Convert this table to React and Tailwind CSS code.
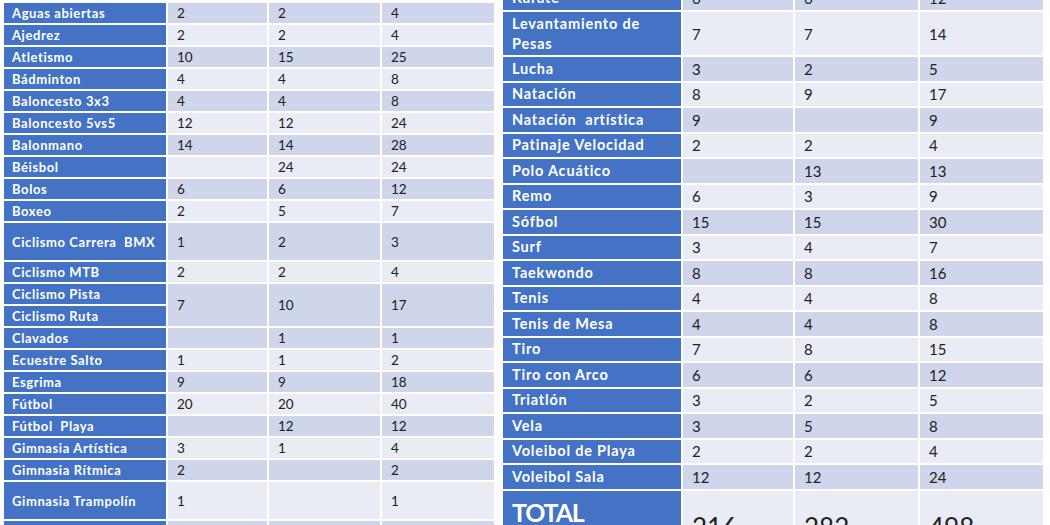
const leftRows = [
  { label: 'Aguas abiertas', v: ['2', '2', '4'] },
  { label: 'Ajedrez', v: ['2', '2', '4'] },
  { label: 'Atletismo', v: ['10', '15', '25'] },
  { label: 'Bádminton', v: ['4', '4', '8'] },
  { label: 'Baloncesto 3x3', v: ['4', '4', '8'] },
  { label: 'Baloncesto 5vs5', v: ['12', '12', '24'] },
  { label: 'Balonmano', v: ['14', '14', '28'] },
  { label: 'Béisbol', v: ['', '24', '24'] },
  { label: 'Bolos', v: ['6', '6', '12'] },
  { label: 'Boxeo', v: ['2', '5', '7'] },
  { label: 'Ciclismo Carrera\u00a0 BMX', v: ['1', '2', '3'], tall: true },
  { label: 'Ciclismo MTB', v: ['2', '2', '4'] },
  { label: 'Ciclismo Pista', v: ['7', '10', '17'], span: 2 },
  { label: 'Ciclismo Ruta', v: null },
  { label: 'Clavados', v: ['', '1', '1'] },
  { label: 'Ecuestre Salto', v: ['1', '1', '2'] },
  { label: 'Esgrima', v: ['9', '9', '18'] },
  { label: 'Fútbol', v: ['20', '20', '40'] },
  { label: 'Fútbol\u00a0 Playa', v: ['', '12', '12'] },
  { label: 'Gimnasia Artística', v: ['3', '1', '4'] },
  { label: 'Gimnasia Rítmica', v: ['2', '', '2'] },
  { label: 'Gimnasia Trampolín', v: ['1', '', '1'], tall: true },
  { label: '', v: ['', '', ''] },
];

const rightRows = [
  { label: 'Karate', v: ['6', '6', '12'] },
  { label: ['Levantamiento de', 'Pesas'], v: ['7', '7', '14'], tall: true },
  { label: 'Lucha', v: ['3', '2', '5'] },
  { label: 'Natación', v: ['8', '9', '17'] },
  { label: 'Natación\u00a0 artística', v: ['9', '', '9'] },
  { label: 'Patinaje Velocidad', v: ['2', '2', '4'] },
  { label: 'Polo Acuático', v: ['', '13', '13'] },
  { label: 'Remo', v: ['6', '3', '9'] },
  { label: 'Sófbol', v: ['15', '15', '30'] },
  { label: 'Surf', v: ['3', '4', '7'] },
  { label: 'Taekwondo', v: ['8', '8', '16'] },
  { label: 'Tenis', v: ['4', '4', '8'] },
  { label: 'Tenis de Mesa', v: ['4', '4', '8'] },
  { label: 'Tiro', v: ['7', '8', '15'] },
  { label: 'Tiro con Arco', v: ['6', '6', '12'] },
  { label: 'Triatlón', v: ['3', '2', '5'] },
  { label: 'Vela', v: ['3', '5', '8'] },
  { label: 'Voleibol de Playa', v: ['2', '2', '4'] },
  { label: 'Voleibol Sala', v: ['12', '12', '24'] },
];

// band colour follows the row index (merged cells keep the first row's fill)
const band = (i) => (i % 2 === 0 ? 'bg-[#cfd5ea]' : 'bg-[#e9ebf5]');

function LeftTable() {
  return (
    <table className="table-fixed border-separate border-spacing-[2px] w-[494px] mt-[1px] shrink-0">
      <colgroup>
        <col className="w-[162px]" />
        <col className="w-[99px]" />
        <col className="w-[111px]" />
        <col className="w-[112px]" />
      </colgroup>
      <tbody>
        {leftRows.map((r, i) => (
          <tr key={i} className={r.tall ? 'h-[37px]' : 'h-[20px]'}>
            <td className="bg-[#4472c4] text-white font-bold text-[13px] leading-[16px] tracking-[0.6px] px-[8px] py-0 whitespace-nowrap">
              {r.label}
            </td>
            {r.v &&
              r.v.map((n, j) => (
                <td
                  key={j}
                  rowSpan={r.span || 1}
                  className={`${band(i)} text-[#222] text-[13.5px] leading-[16px] pl-[9px] py-0`}
                >
                  {n}
                </td>
              ))}
          </tr>
        ))}
      </tbody>
    </table>
  );
}

function RightTable() {
  return (
    <table className="table-fixed border-separate border-spacing-[2px] w-[544px] -mt-[15.5px] shrink-0">
      <colgroup>
        <col className="w-[178px]" />
        <col className="w-[110px]" />
        <col className="w-[123px]" />
        <col className="w-[123px]" />
      </colgroup>
      <tbody>
        {rightRows.map((r, i) => (
          <tr key={i} className={r.tall ? 'h-[43px]' : 'h-[23.5px]'}>
            <td className="bg-[#4472c4] text-white font-bold text-[14.5px] leading-[20px] tracking-[0.8px] px-[9px] py-0 whitespace-nowrap">
              {Array.isArray(r.label) ? (
                <>
                  {r.label[0]}
                  <br />
                  {r.label[1]}
                </>
              ) : (
                r.label
              )}
            </td>
            {r.v.map((n, j) => (
              <td key={j} className={`${band(i)} text-[#222] text-[15px] leading-[18px] pl-[9px] py-0`}>
                {n}
              </td>
            ))}
          </tr>
        ))}
        <tr className="h-[82px]">
          <td className="bg-[#4472c4] text-white font-bold text-[25px] leading-[32px] tracking-[-1.2px] px-[9px] pt-[5px] align-top">
            TOTAL
          </td>
          {['216', '282', '498'].map((n) => (
            <td key={n} className="bg-[#e9ebf5] text-[#222] text-[26px] leading-[30px] pl-[9px] pt-[21px] align-top">
              {n}
            </td>
          ))}
        </tr>
      </tbody>
    </table>
  );
}

export default function App() {
  return (
    <div className="w-[1050px] h-[525px] overflow-hidden bg-white flex items-start gap-[5px] pl-[2px] font-['Lato','Open_Sans',sans-serif]">
      <LeftTable />
      <RightTable />
    </div>
  );
}
